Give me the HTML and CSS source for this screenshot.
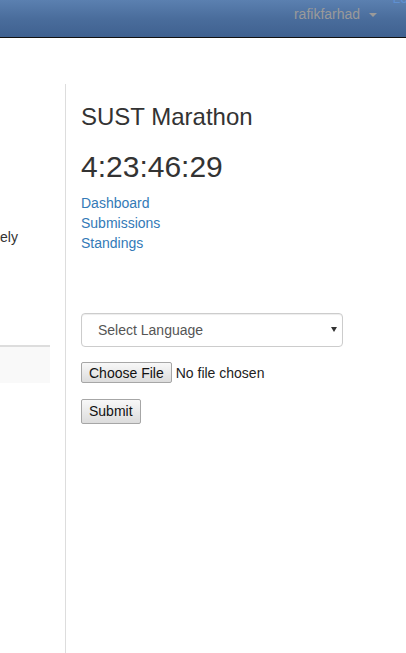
FILE: index.html
```html
<!DOCTYPE html>
<html>
<head>
<meta charset="utf-8">
<link rel="stylesheet" href="styles.css">
</head>
<body>
<nav class="navbar">
  <span class="cut-link">Lo</span>
  <div class="user">rafikfarhad <span class="caret"></span></div>
</nav>
<div class="page">
  <div class="left">
    <p class="left-text">ely</p>
    <div class="panel"></div>
  </div>
  <div class="right">
    <h3 class="title">SUST Marathon</h3>
    <h2 class="clock">4:23:46:29</h2>
    <div class="links">
      <a href="#">Dashboard</a>
      <a href="#">Submissions</a>
      <a href="#">Standings</a>
    </div>
    <form class="form">
      <div class="select-wrap">
        <select class="form-control">
          <option>Select Language</option>
        </select>
        <span class="select-arrow"></span>
      </div>
      <input class="file" type="file">
      <button class="btn" type="button">Submit</button>
    </form>
  </div>
</div>
</body>
</html>
```
FILE: styles.css
```css
html, body {
  margin: 0;
  padding: 0;
  height: 100%;
}
body {
  font-family: "Liberation Sans", Arial, sans-serif;
  font-size: 14px;
  line-height: 20px;
  color: #333;
  background: #fff;
  overflow: hidden;
}
.navbar {
  position: relative;
  height: 37px;
  border-bottom: 1px solid #111;
  background: linear-gradient(to bottom, #5b80b0 0%, #4a6d9c 50%, #3f6190 100%);
  display: flex;
  justify-content: flex-end;
  align-items: flex-start;
}
.cut-link {
  position: absolute;
  right: -2px;
  top: -9px;
  font-size: 14px;
  line-height: 14px;
  color: #5f8fd0;
}
.user {
  margin-top: 4px;
  margin-right: 29px;
  color: #9a9a9a;
  line-height: 20px;
}
.caret {
  display: inline-block;
  width: 0;
  height: 0;
  margin-left: 5px;
  vertical-align: middle;
  border-top: 4px solid #9a9a9a;
  border-left: 4px solid transparent;
  border-right: 4px solid transparent;
}
.page {
  display: flex;
  height: calc(100% - 38px);
}
.left {
  width: 50px;
  flex: none;
  margin-right: 15px;
  padding-top: 189px;
}
.left-text {
  margin: 0;
  white-space: nowrap;
}
.panel {
  margin-top: 98px;
  height: 36px;
  border-top: 2px solid #ddd;
  background: #f9f9f9;
}
.right {
  flex: 1;
  margin-top: 46px;
  border-left: 1px solid #ddd;
  padding-left: 15px;
}
.title {
  margin: 20px 0 10px;
  font-size: 24px;
  font-weight: 500;
  line-height: 1.1;
}
.clock {
  margin: 20px 0 10px;
  font-size: 30px;
  font-weight: 500;
  line-height: 1.1;
}
.links {
  display: flex;
  flex-direction: column;
  align-items: flex-start;
}
.links a {
  color: #337ab7;
  text-decoration: none;
}
.form {
  margin-top: 60px;
  display: flex;
  flex-direction: column;
  align-items: flex-start;
}
.select-wrap {
  position: relative;
  margin-bottom: 15px;
}
.form-control {
  display: block;
  width: 262px;
  height: 34px;
  padding: 6px 12px 6px 16px;
  font-family: inherit;
  font-size: 14px;
  color: #555;
  background: #fff;
  border: 1px solid #ccc;
  border-radius: 4px;
  box-shadow: inset 0 1px 1px rgba(0,0,0,.075);
  -webkit-appearance: none;
  appearance: none;
}
.select-arrow {
  position: absolute;
  left: 250px;
  top: 14px;
  width: 0;
  height: 0;
  border-top: 5px solid #333;
  border-left: 3px solid transparent;
  border-right: 3px solid transparent;
}
.file {
  font-family: inherit;
  font-size: 14px;
  color: #222;
  margin-bottom: 16px;
}
.file::file-selector-button {
  font-family: inherit;
  font-size: 14px;
  color: #111;
  height: 21px;
  padding: 0 7px;
  margin-right: 4px;
  border: 1px solid #a6a6a6;
  border-radius: 2px;
  background: linear-gradient(to bottom, #f8f8f8, #dcdcdc);
}
.btn {
  box-sizing: border-box;
  font-family: inherit;
  font-size: 14px;
  line-height: 17px;
  color: #111;
  height: 25px;
  padding: 3px 7px;
  border: 1px solid #a6a6a6;
  border-radius: 2px;
  background: linear-gradient(to bottom, #f8f8f8, #dcdcdc);
}
```
